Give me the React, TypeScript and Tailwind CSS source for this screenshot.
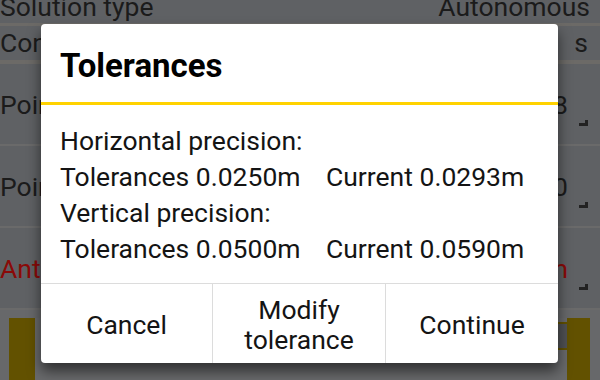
import React from 'react';

function Corner() {
  return <div className="ml-[11px] mt-[56px] w-[9px] h-[6px] border-r-[3px] border-b-[3px] border-[#222]" />;
}

function Row({ label, value, red }: { label: string; value: string; red?: boolean }) {
  return (
    <div className={`flex justify-between h-[80px] ${red ? 'text-[#8a0a08]' : ''}`}>
      <div className="pt-[29px]">{label}</div>
      <div className="flex items-start pr-[12px]">
        <div className="pt-[29px]">{value}</div>
        <Corner />
      </div>
    </div>
  );
}

export default function App() {
  return (
    <div className="relative w-[600px] h-[380px] overflow-hidden bg-[#5f6164] font-['Roboto',sans-serif] text-[26.5px] leading-[24px] text-[#1b1b1b]">
      {/* background screen */}
      <div className="flex justify-between h-[23px] overflow-hidden pr-[10px]">
        <div className="-mt-[5px]">Solution type</div>
        <div className="-mt-[5px]">Autonomous</div>
      </div>
      <div className="h-[3px] bg-[#6c6a67]" />
      <div className="flex justify-between h-[34px] pt-[5px] pr-[12px]">
        <div>Constellations</div>
        <div>s</div>
      </div>
      <div className="h-[4px] bg-[#6c6a67]" />
      <Row label="Point 1" value="8" />
      <div className="h-[2px] bg-[#6a6a6a]" />
      <Row label="Point 2" value="0" />
      <div className="h-[2px] bg-[#6a6a6a]" />
      <Row label="Antenna height" value="m" red />
      <div className="h-[2px] bg-[#6a6a6a]" />
      <div className="h-[80px] bg-[#67686a] pt-[8px] pl-[9px] pr-[10px]">
        <div className="h-[70px] bg-[#625100] pl-[26px] pr-[23px] pb-[2px]">
          <div className="h-full bg-[#696a6c] flex justify-end">
            <div className="mt-[4px] w-[26px] h-[28px] bg-[#505153] border-y-2 border-[#625100]" />
          </div>
        </div>
      </div>

      {/* dialog */}
      <div className="absolute left-[41px] top-[24px] w-[517px] h-[339px] bg-white rounded-[4px] shadow-[0_8px_14px_rgba(0,0,0,0.55)] flex flex-col text-[#141414]">
        <div className="pt-[22px] pb-[16px] pl-[19px] text-[33px] leading-[40px] font-bold text-black">Tolerances</div>
        <div className="h-[3px] bg-[#ffd200]" />
        <div className="pt-[18px] pb-[16px] px-[19px] text-[26.5px] leading-[36px]">
          <div>Horizontal precision:</div>
          <div className="flex">
            <span className="w-[266px]">Tolerances 0.0250m</span>
            <span>Current 0.0293m</span>
          </div>
          <div>Vertical precision:</div>
          <div className="flex">
            <span className="w-[266px]">Tolerances 0.0500m</span>
            <span>Current 0.0590m</span>
          </div>
        </div>
        <div className="flex-1 grid grid-cols-[172px_173px_1fr] border-t border-[#dcdcdc] divide-x divide-[#dcdcdc] text-[26.5px] leading-[30px]">
          <button className="flex items-center justify-center pt-[2px]">Cancel</button>
          <button className="flex items-center justify-center text-center pt-[2px]">
            Modify
            <br />
            tolerance
          </button>
          <button className="flex items-center justify-center pt-[2px]">Continue</button>
        </div>
      </div>
    </div>
  );
}
